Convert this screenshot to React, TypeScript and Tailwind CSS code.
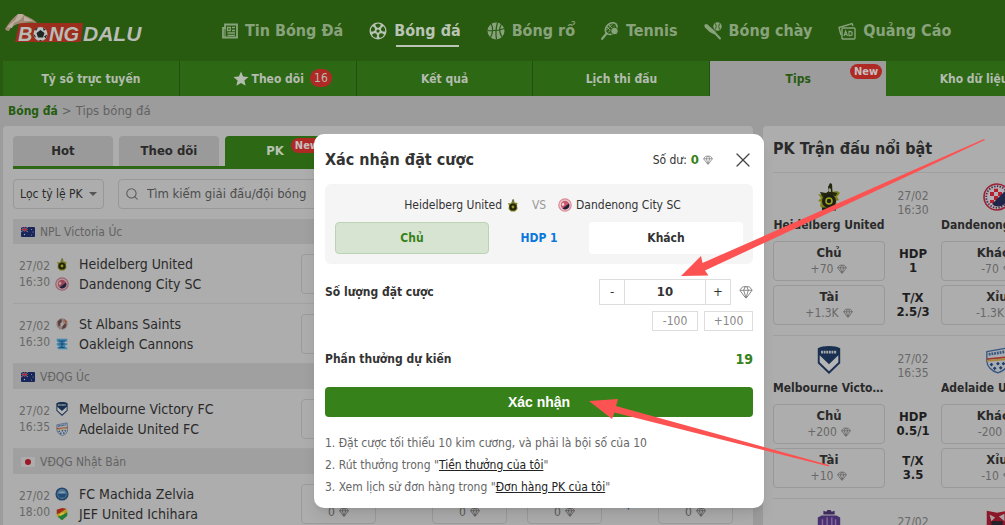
import React from "react";
import { Gem, Search, X } from "lucide-react";
import { MdStar } from "react-icons/md";

type Side = { name: string; crest: React.ReactNode };
type Match = { date: string; time: string; home: Side; away: Side };
type League = { name: string; flag: React.ReactNode; matches: Match[] };

const svgBase = "block shrink-0";

function Heidelberg({ className }: { className: string }) {
  return (
    <svg viewBox="0 0 24 28" className={`${svgBase} ${className}`}>
      <path d="M13 2l2 2-1 5 6-1 3 2-3 4 2 3-3 1 1 5-4 4H7l-4-4 1-4-3-1 3-3-3-4 5 1 5-2z" fill="#7d8218" />
      <path d="M3 9l6 1 3-2-1-4 2-4 2 1 .5 8 5 1-2 3-6-1-7 2z" fill="#25270f" />
      <path d="M12 5l2 1v3h-2z" fill="#9a9a92" />
      <circle cx="12" cy="18" r="7" fill="#1d1f12" />
      <circle cx="12" cy="18" r="3" fill="none" stroke="#9ba51c" strokeWidth="1.6" />
      <path d="M5 26h14" stroke="#1d1f12" strokeWidth="3" />
    </svg>
  );
}

function HeidelbergSmall() {
  return (
    <svg viewBox="0 0 14 14" className="block size-3.5 shrink-0">
      <path d="M6.500 1.500h1.500l.5 3 3 .5-.5 2 .5 4-2.500 2.500H5L2.500 11 3 7.500 2 5l3 .5z" fill="#7c7f1e" />
      <path d="M6.500 1.500h1.200l.3 3H6.200z" fill="#6d7358" />
      <circle cx="7" cy="9" r="3.600" fill="#23240c" />
      <circle cx="7" cy="9" r="1.400" fill="#98992a" />
    </svg>
  );
}

function Dandenong({ className }: { className: string }) {
  return (
    <svg viewBox="0 0 28 28" className={`${svgBase} ${className}`}>
      <circle cx="14" cy="14" r="13" fill="#b9a9ad" stroke="#9a2234" strokeWidth="1.6" />
      <circle cx="14" cy="14" r="10.8" fill="none" stroke="#3c3550" strokeWidth="1.8" strokeDasharray="1.4 1.4" />
      <circle cx="14" cy="14" r="8.6" fill="#b5b1b6" />
      <path d="M7 9h4v4H7zM11 5.800h4V9h-4zM11 13h4v4h-4zM15 9h4v4h-4zM7 17h4v3H7z" fill="#b3202f" />
      <path d="M21.500 8.500A8.600 8.600 0 0 1 9 21z" fill="#20254a" />
    </svg>
  );
}

function DandenongSmall({ dim = false }: { dim?: boolean }) {
  return (
    <svg viewBox="0 0 14 14" className="block size-3.5 shrink-0">
      <circle cx="7" cy="7" r="6.200" fill={dim ? "#b39ba0" : "#f0c9d0"} stroke={dim ? "#a0606c" : "#dc8a98"} strokeWidth="1.2" />
      <circle cx="7" cy="7" r="4.200" fill={dim ? "#9c4755" : "#c9596b"} />
      <path d="M11 5.500A4.200 4.200 0 0 1 4.500 10.500z" fill="#23223c" />
      <path d="M3.500 6l2-1.500L6.500 7l-2 1z" fill={dim ? "#b8a3a7" : "#f3dde0"} />
    </svg>
  );
}

function StAlbans() {
  return (
    <svg viewBox="0 0 16 16" className="block size-3.5 shrink-0">
      <circle cx="8" cy="8" r="6.500" fill="#8e7f7d" />
      <path d="M3 5l4-3 1 5-4 4zM9 9l4-2-1 5-4 2z" fill="#5c3a3c" />
      <path d="M10 2l4 3-2 2z" fill="#a3502f" />
      <path d="M6 7l3-2 1 4-3 2z" fill="#a8a4a2" />
    </svg>
  );
}

function Oakleigh() {
  return (
    <svg viewBox="0 0 16 16" className="block size-3.5 shrink-0">
      <path d="M2 2h12v3h-3v2h3v2h-2v3h2v2H4l-2-2 3-1-3-2V7l3-1-3-1z" fill="#3f86b0" />
      <path d="M4 4.500h8M5 8h6M5 12h6M8 4v8" stroke="#1c4a70" strokeWidth="1.200" />
    </svg>
  );
}

function Victory({ className }: { className: string }) {
  return (
    <svg viewBox="0 0 26 30" className={`${svgBase} ${className}`}>
      <path d="M13 0c5 0 9 .8 12 2.500v16L13 30 1 18.500v-16C4 .8 8 0 13 0z" fill="#1a3050" />
      <path d="M3 10l10 9.500L23 10v7.500L13 27 3 17.500z" fill="#b4b6b8" />
      <path d="M4.500 6.500h17" stroke="#a9acaf" strokeWidth="3" strokeDasharray="2 .8" />
    </svg>
  );
}

function Adelaide({ className }: { className: string }) {
  return (
    <svg viewBox="0 0 26 30" className={`${svgBase} ${className}`}>
      <path d="M2 6L24 2l1 14c0 7-5 11-11 13C7 27 2 22 2 16z" fill="#a9acb2" stroke="#34567f" strokeWidth="1.400" />
      <path d="M4 9l18-3" stroke="#34567f" strokeWidth="3" strokeDasharray="2 1" />
      <path d="M2 13l22-2v2L2 15z" fill="#a3372e" />
      <path d="M2 15l22-2v2L2 17z" fill="#a98a3e" />
      <path d="M7 18l2 2-2 2-2-2zM14 17l2 2-2 2-2-2zM20 17l2 2-2 2-2-2zM10.500 22l2 2-2 2-2-2zM17 21.500l2 2-2 2-2-2z" fill="#1d3d6b" />
    </svg>
  );
}

function Machida() {
  return (
    <svg viewBox="0 0 16 16" className="block size-3.5 shrink-0">
      <circle cx="8" cy="8" r="7.500" fill="#26476a" />
      <circle cx="8" cy="8" r="5.600" fill="#4d7594" />
      <path d="M3 8h10l-2 4H5z" fill="#234b75" />
      <path d="M5 6h6" stroke="#94a5b2" strokeWidth="1.400" />
    </svg>
  );
}

function Jef() {
  return (
    <svg viewBox="0 0 16 16" className="block size-3.5 shrink-0">
      <path d="M2 3l6-2 6 2v7l-6 5-6-5z" fill="#b59c20" />
      <path d="M2 3l6-2 5 1-8 5-3 1z" fill="#a32a22" />
      <path d="M3 11l4-1 7-4v4l-6 5z" fill="#1f7c3c" />
      <path d="M5 8l5-2v2l-4 2z" fill="#d0c34a" />
    </svg>
  );
}

function Sanfrecce({ className }: { className: string }) {
  return (
    <svg viewBox="0 0 28 30" className={`${svgBase} ${className}`}>
      <path d="M8 2l3 1 1.500-2h3L17 3l3-1v4H8z" fill="#3f2a5c" />
      <path d="M2 9l4-2h16l4 2v11L14 30 2 20z" fill="#493170" />
      <path d="M7 11v13M12 9v17M17 9v17M21 11v12" stroke="#84699f" strokeWidth="1.500" />
    </svg>
  );
}

function RedCrest({ className }: { className: string }) {
  return (
    <svg viewBox="0 0 28 30" className={`${svgBase} ${className}`}>
      <path d="M3 2l11 2 11-2v18L14 30 3 20z" fill="#8b1728" />
      <path d="M6 6l6 3-4 4zM16 8l6-3v8z" fill="#aaa2a2" />
      <path d="M8 13h12v5H8z" fill="#23212c" />
    </svg>
  );
}

function AustraliaFlag() {
  return (
    <svg viewBox="0 0 14 10" className="block h-2.5 w-3.5 shrink-0">
      <rect width="14" height="10" rx="1" fill="#17275c" />
      <path d="M0 0l7 5M7 0L0 5" stroke="#9a9aa8" strokeWidth=".8" />
      <path d="M3.500 0v5M0 2.500h7" stroke="#9f2f3c" strokeWidth="1.200" />
      <circle cx="3.500" cy="7.500" r=".7" fill="#a5a5b0" />
      <circle cx="10.500" cy="2.500" r=".5" fill="#a5a5b0" />
      <circle cx="12" cy="5" r=".5" fill="#a5a5b0" />
      <circle cx="10.500" cy="8" r=".5" fill="#a5a5b0" />
    </svg>
  );
}

function JapanFlag() {
  return (
    <svg viewBox="0 0 14 10" className="block h-2.5 w-3.5 shrink-0">
      <rect width="14" height="10" rx="1" fill="#acacac" />
      <circle cx="7" cy="5" r="3" fill="#9c1826" />
    </svg>
  );
}

function Logo() {
  return (
    <svg viewBox="0 0 144 34" className="block h-[34px] w-36 shrink-0" role="img" aria-label="Bong Dalu">
      <path d="M14 9h64l-2 19H10z" fill="#9d2d1c" />
      <g fontFamily="Liberation Sans, sans-serif" fontWeight="700" fontStyle="italic" fontSize="20" fill="#b9bcb6">
        <text x="13" y="27">B</text>
        <text x="44" y="27">NG</text>
        <text x="78" y="27" fontSize="21">DALU</text>
      </g>
      <path d="M0 15Q7 4 13 0q3-1 6 1 8 3 13 8-6-1-13 0-7 0-12 4-2 1-3 4Q1 17 0 15z" fill="#a08a76" />
      <path d="M13 0q3-1 6 1l-4 5-6 3zM2 13l8-7-3 8zM19 2l9 5-9 0z" fill="#bcae9e" />
      <circle cx="35.500" cy="20" r="7" fill="#bcc0c0" />
      <path d="M35.500 16l4 3-1.500 4.500h-5L31.500 19zM30 15l3-1.500-2 3.500zM38 13.500l3 2.500-2.500.5zM42 20.500l-1 4-2-2zM33.500 26h4l-2 1zM28.600 20l2 2-.5 2.500z" fill="#202522" />
    </svg>
  );
}

function NewsIcon() {
  return (
    <svg viewBox="0 0 16 16" className="block size-4 shrink-0" fill="none" stroke="currentColor" strokeWidth="1.800">
      <path d="M3 1.500h12v13H1V5h2z" />
      <path d="M3 5v9" strokeWidth="1.200" />
      <path d="M5.500 4.500h2.800v3H5.500zM10 4.500h3M10 7.500h3M5.500 10h7.500M5.500 12.300h7.500" strokeWidth="1.300" />
    </svg>
  );
}

function SoccerIcon() {
  return (
    <svg viewBox="0 0 18 18" className="block size-[18px] shrink-0">
      <circle cx="9" cy="9" r="8.500" fill="currentColor" />
      <g fill="#285a10">
        {[0, 72, 144, 216, 288].map((angle) => (
          <path key={angle} d="M6.200 2.400L9 1.600l2.800.8-.8 2.400L9 6 7 4.800z" transform={`rotate(${angle} 9 9)`} />
        ))}
        <path d="M9 7.300l1.700 1.200-.6 2H7.900l-.6-2z" />
      </g>
    </svg>
  );
}

function BasketballIcon() {
  return (
    <svg viewBox="0 0 18 18" className="block size-[18px] shrink-0">
      <circle cx="9" cy="9" r="8.500" fill="currentColor" />
      <g fill="none" stroke="#285a10" strokeWidth="1.200">
        <path d="M10.500 .5Q8 9 9.500 17.500M.5 8.500Q9 9.500 17.500 6.500" />
        <path d="M4 1.500Q7.500 8 3.500 15.500M14.500 2Q10.500 8 15 15" />
      </g>
    </svg>
  );
}

function TennisIcon() {
  return (
    <svg viewBox="0 0 18 18" className="block size-[18px] shrink-0" fill="none" stroke="currentColor">
      <ellipse cx="10.200" cy="6.600" rx="6.600" ry="5" transform="rotate(-45 10.200 6.600)" strokeWidth="1.600" />
      <path d="M6 5l6 6M8 3l6 6M5 8.500l7-7M7 10.500l7-7" strokeWidth="1" />
      <path d="M5.500 11.500L1.200 16.800" strokeWidth="2.200" strokeLinecap="round" />
      <circle cx="13.500" cy="9" r="3.800" fill="currentColor" stroke="#285a10" />
    </svg>
  );
}

function BaseballIcon() {
  return (
    <svg viewBox="0 0 18 18" className="block size-[18px] shrink-0">
      <path d="M.8 2.500Q2.200 1.500 3.500 2.500L12 10l-1.500 2.500Q4.500 10 1 5.500-.2 3.700.8 2.500z" fill="currentColor" />
      <path d="M10 10l6 6.500" stroke="currentColor" strokeWidth="2" strokeLinecap="round" />
      <circle cx="13.500" cy="4.500" r="4.200" fill="currentColor" />
      <path d="M11.500 1.500q1.500 2.500 0 6M15.500 1.500q-1.500 2.500 0 6" stroke="#285a10" strokeWidth=".9" fill="none" />
    </svg>
  );
}

function AdIcon() {
  return (
    <svg viewBox="0 0 18 18" className="block size-[18px] shrink-0" fill="none" stroke="currentColor" strokeWidth="1.400">
      <rect x="4" y="6" width="13" height="11" rx="1" />
      <path d="M3 13L1 5.500 14 1.500l1 2.500" />
      <path d="M6 14l1.700-5 1.700 5M6.500 12.500h2.400M11 9.300v4.400h1q2.200-.2 2.200-2.200T12 9.300z" strokeWidth="1.200" />
    </svg>
  );
}

const sports = [
  { label: "Tin Bóng Đá", icon: <NewsIcon /> },
  { label: "Bóng đá", icon: <SoccerIcon />, active: true },
  { label: "Bóng rổ", icon: <BasketballIcon /> },
  { label: "Tennis", icon: <TennisIcon /> },
  { label: "Bóng chày", icon: <BaseballIcon /> },
  { label: "Quảng Cáo", icon: <AdIcon /> },
];

const leagues: League[] = [
  {
    name: "NPL Victoria Úc",
    flag: <AustraliaFlag />,
    matches: [
      {
        date: "27/02",
        time: "16:30",
        home: { name: "Heidelberg United", crest: <HeidelbergSmall /> },
        away: { name: "Dandenong City SC", crest: <DandenongSmall dim /> },
      },
      {
        date: "27/02",
        time: "16:30",
        home: { name: "St Albans Saints", crest: <StAlbans /> },
        away: { name: "Oakleigh Cannons", crest: <Oakleigh /> },
      },
    ],
  },
  {
    name: "VĐQG Úc",
    flag: <AustraliaFlag />,
    matches: [
      {
        date: "27/02",
        time: "16:35",
        home: { name: "Melbourne Victory FC", crest: <Victory className="size-3.5" /> },
        away: { name: "Adelaide United FC", crest: <Adelaide className="size-3.5" /> },
      },
    ],
  },
  {
    name: "VĐQG Nhật Bản",
    flag: <JapanFlag />,
    matches: [
      {
        date: "27/02",
        time: "18:00",
        home: { name: "FC Machida Zelvia", crest: <Machida /> },
        away: { name: "JEF United Ichihara", crest: <Jef /> },
      },
    ],
  },
];

const featured = [
  {
    date: "27/02",
    time: "16:30",
    home: "Heidelberg United",
    away: "Dandenong City SC",
    homeCrest: <Heidelberg className="h-7 w-6" />,
    awayCrest: <Dandenong className="size-7" />,
    lines: [
      { left: "Chủ", leftValue: "+70", label: "HDP", value: "1", right: "Khách", rightValue: "-70" },
      { left: "Tài", leftValue: "+1.3K", label: "T/X", value: "2.5/3", right: "Xỉu", rightValue: "-1.3K" },
    ],
  },
  {
    date: "27/02",
    time: "16:35",
    home: "Melbourne Victory FC",
    away: "Adelaide United FC",
    homeCrest: <Victory className="h-7 w-7" />,
    awayCrest: <Adelaide className="h-7 w-6" />,
    lines: [
      { left: "Chủ", leftValue: "+200", label: "HDP", value: "0.5/1", right: "Khách", rightValue: "-200" },
      { left: "Tài", leftValue: "+10", label: "T/X", value: "3.5", right: "Xỉu", rightValue: "-10" },
    ],
  },
  {
    date: "27/02",
    time: "17:00",
    home: "Sanfrecce Hiroshima",
    away: "Kashima Antlers",
    homeCrest: <Sanfrecce className="size-7" />,
    awayCrest: <RedCrest className="size-7" />,
    lines: [],
  },
];

function OddsButton() {
  return (
    <button className="flex h-10 w-[75px] flex-col items-center justify-center rounded border border-[#9b9b9b] text-xs leading-4 text-[#5c5c5c]">
      <span className="font-bold text-[#2a2a2a]">PK</span>
      <span className="flex items-center gap-1">
        0 <Gem className="size-2.5" />
      </span>
    </button>
  );
}

function MatchRow({ match }: { match: Match }) {
  return (
    <li className="flex h-[60px] items-center border-b border-[#a2a2a2] pl-1.5">
      <div className="w-9 text-[12px] leading-4 text-[#686868]">
        <div>{match.date}</div>
        <div>{match.time}</div>
      </div>
      <div className="flex w-[246px] flex-col text-[14px] leading-5 text-[#2a2a2a]">
        {[match.home, match.away].map((side) => (
          <a key={side.name} href="#" className="flex items-center gap-2.5">
            {side.crest}
            {side.name}
          </a>
        ))}
      </div>
      <div className="flex items-center gap-5">
        {["HDP", "T/X"].map((label) => (
          <div key={label} className="flex items-center">
            <OddsButton />
            <span className="w-14 text-center text-xs font-bold text-[#0d4f8f]">{label}</span>
            <OddsButton />
          </div>
        ))}
      </div>
    </li>
  );
}

function FeaturedBox({ label, value }: { label: string; value: string }) {
  return (
    <button className="flex h-10 w-28 flex-col items-center justify-center rounded border border-[#999999]">
      <span className="text-[13px] leading-4 font-bold text-[#2a2a2a]">{label}</span>
      <span className="flex items-center gap-1 text-[12px] leading-4 text-[#686868]">
        {value}
        <Gem className="size-2.5" />
      </span>
    </button>
  );
}

function FeaturedTeam({ name, crest }: { name: string; crest: React.ReactNode }) {
  return (
    <div className="flex w-28 flex-col items-center">
      {crest}
      <span className="mt-1.5 w-full truncate text-center text-[12px] leading-4 font-bold text-[#2a2a2a]">{name}</span>
    </div>
  );
}

function FeaturedMatch({ match }: { match: (typeof featured)[number] }) {
  return (
    <article className="border-t border-[#a0a0a0] pt-2.5 pb-2.5">
      <div className="flex h-[58px] justify-between">
        <FeaturedTeam name={match.home} crest={match.homeCrest} />
        <div className="mt-1.5 text-center text-[12px] leading-3.5 text-[#686868]">
          <div>{match.date}</div>
          <div>{match.time}</div>
        </div>
        <FeaturedTeam name={match.away} crest={match.awayCrest} />
      </div>
      <div className="flex flex-col gap-1">
        {match.lines.map((line) => (
          <div key={line.label} className="flex items-center justify-between">
            <FeaturedBox label={line.left} value={line.leftValue} />
            <div className="text-center text-[13px] leading-3.5 font-bold text-[#1e1e1e]">
              <div>{line.label}</div>
              <div>{line.value}</div>
            </div>
            <FeaturedBox label={line.right} value={line.rightValue} />
          </div>
        ))}
      </div>
    </article>
  );
}

const subNavItem = "flex flex-1 items-center justify-center border-r border-[#225010] text-[12px] font-bold text-[#b4bcb0]";

function BetDialog() {
  return (
    <div
      role="dialog"
      aria-labelledby="bet-title"
      className="absolute top-[134px] left-[314px] w-[450px] rounded-[10px] bg-white px-[11px] pt-3 pb-2.5 text-[#333] shadow-lg"
    >
      <div className="flex h-[38px] items-start">
        <h2 id="bet-title" className="flex-1 text-[16px] leading-7 font-bold">Xác nhận đặt cược</h2>
        <span className="flex h-7 items-center gap-1 text-[12px]">
          Số dư: <b className="text-[13px] text-[#37811a]">0</b>
          <Gem className="size-2.5 text-[#888]" />
        </span>
        <button aria-label="Đóng" className="ml-5 flex h-7 w-5 items-center justify-center text-[#444]">
          <X className="size-6 shrink-0" strokeWidth={1.2} />
        </button>
      </div>

      <section className="rounded-md bg-[#f5f5f5] px-2.5 pt-3 pb-2.5">
        <div className="flex h-[18px] items-center text-[12px]">
          <span className="flex flex-1 items-center justify-end gap-1">
            Heidelberg United <HeidelbergSmall />
          </span>
          <span className="w-[38px] text-center text-[#999]">VS</span>
          <span className="flex flex-1 items-center gap-1">
            <DandenongSmall /> Dandenong City SC
          </span>
        </div>
        <div className="mt-2 flex items-center text-[12px] font-bold">
          <button className="h-8 w-[154px] rounded border border-[#bdd2b5] bg-[#d8e4d2] text-[#37811a]">Chủ</button>
          <span className="flex-1 text-center text-[#0a78dc]">HDP 1</span>
          <button className="h-8 w-[154px] rounded bg-white">Khách</button>
        </div>
      </section>

      <div className="mt-[15px] flex items-center">
        <label htmlFor="amount" className="flex-1 text-[12px] font-bold">Số lượng đặt cược</label>
        <div className="flex h-[26px] w-[132px] border border-[#ddd]">
          <button aria-label="Giảm" className="w-6 text-[13px]">-</button>
          <input
            id="amount"
            defaultValue="10"
            className="min-w-0 flex-1 border-x border-[#ddd] text-center text-[13px] font-bold outline-none"
          />
          <button aria-label="Tăng" className="w-6 text-[13px]">+</button>
        </div>
        <Gem className="ml-2 size-3.5 text-[#777]" strokeWidth={1.5} />
      </div>
      <div className="mt-1.5 flex justify-end gap-1.5 text-[12px] text-[#888]">
        <button className="h-5 w-[46px] border border-[#ddd]">-100</button>
        <button className="h-5 w-[49px] border border-[#ddd]">+100</button>
      </div>

      <div className="mt-[18px] flex h-5 items-center justify-between font-bold">
        <span className="text-[12px]">Phần thưởng dự kiến</span>
        <span className="text-[14px] text-[#37811a]">19</span>
      </div>

      <button className="mt-[18px] h-[30px] w-full rounded bg-[#37811a] font-['Liberation_Sans',sans-serif] text-[14px] font-bold text-white">
        Xác nhận
      </button>

      <ol className="mt-[15px] text-[12px] leading-[22px] text-[#666]">
        <li>1. Đặt cược tối thiểu 10 kim cương, và phải là bội số của 10</li>
        <li>
          2. Rút thưởng trong "<a href="#" className="text-[#222] underline">Tiền thưởng của tôi</a>"
        </li>
        <li>
          3. Xem lịch sử đơn hàng trong "<a href="#" className="text-[#222] underline">Đơn hàng PK của tôi</a>"
        </li>
      </ol>
    </div>
  );
}

export default function App() {
  return (
    <div className="relative h-screen overflow-hidden bg-[#9c9c9c] font-['DejaVu_Sans_Condensed','Noto_Sans',sans-serif]">
      <header className="bg-[#285a10]">
        <div className="flex h-[61px] items-center pl-[5px]">
          <Logo />
          <nav className="ml-[73px] flex gap-[26px] text-[16px] font-bold whitespace-nowrap text-[#88a37c]">
            {sports.map((sport) => (
              <a
                key={sport.label}
                href="#"
                className={sport.active ? "flex items-center gap-[7px] text-[#b9c4b4]" : "flex items-center gap-[7px]"}
              >
                {sport.icon}
                <span className={sport.active ? "relative after:absolute after:inset-x-0.5 after:-bottom-1 after:h-0.5 after:bg-[#b9c4b4]" : ""}>
                  {sport.label}
                </span>
              </a>
            ))}
          </nav>
        </div>
        <nav className="pl-[3px]">
          <div className="flex h-[35px] w-[1060px] bg-[#2d6915]">
            <a href="#" className={subNavItem}>Tỷ số trực tuyến</a>
            <a href="#" className={subNavItem}>
              <MdStar className="mr-0.5 size-[18px]" />
              <span className="relative">
                Theo dõi
                <span className="absolute -top-px left-full ml-1.5 w-[22px] rounded-full bg-[#b02a25] text-center leading-[18px] font-normal">16</span>
              </span>
            </a>
            <a href="#" className={subNavItem}>Kết quả</a>
            <a href="#" className={subNavItem}>Lịch thi đấu</a>
            <a href="#" className="relative flex flex-1 items-center justify-center bg-[#9c9c9c] text-[12px] font-bold text-[#275a10]">
              Tips
              <span className="absolute top-[3px] right-1 rounded-full bg-[#b02a25] px-1 text-[11px] leading-[15px] text-[#c8c0c0]">New</span>
            </a>
            <a href="#" className={subNavItem}>Kho dữ liệu</a>
          </div>
        </nav>
      </header>

      <nav className="flex h-[30px] items-center gap-1 pl-2 text-[13px] text-[#626262]">
        <a href="#" className="text-[12px] font-bold text-[#245c0e]">Bóng đá</a>
        <span>&gt;</span>
        <a href="#">Tips bóng đá</a>
      </nav>

      <main className="flex gap-2.5 pl-[3px]">
        <section className="w-[750px] shrink-0 rounded-t bg-[#adadad] px-2.5 pt-2.5">
          <div className="flex gap-1.5 border-b-[3px] border-[#2d6915] text-[13px] font-bold text-[#2a2a2a]">
            <button className="h-[30px] w-[100px] rounded-t bg-[#9a9a9a]">Hot</button>
            <button className="h-[30px] w-[100px] rounded-t bg-[#9a9a9a]">Theo dõi</button>
            <button className="relative h-[30px] w-[100px] rounded-t bg-[#2d6915] text-[#b8c2b3]">
              PK
              <span className="absolute top-0.5 right-0.5 rounded-full bg-[#b02a25] px-1 text-[11px] leading-[15px] text-[#c8c0c0]">New</span>
            </button>
          </div>
          <div className="mt-2.5 flex gap-3.5">
            <div className="relative flex items-center">
              <select aria-label="Lọc tỷ lệ PK" className="h-[30px] w-[91px] appearance-none rounded border border-[#989898] bg-transparent pl-1.5 text-[12px] text-[#2a2a2a]">
                <option>Lọc tỷ lệ PK</option>
              </select>
              <svg viewBox="0 0 8 4" className="pointer-events-none absolute right-[7px] h-1 w-2">
                <path d="M0 0h8L4 4z" fill="#555" />
              </svg>
            </div>
            <label className="flex h-[30px] w-[300px] items-center gap-2 rounded border border-[#989898] pl-1.5 text-[#5a5a5a]">
              <Search className="size-3.5" strokeWidth={1.8} />
              <input aria-label="Tìm kiếm" placeholder="Tìm kiếm giải đấu/đội bóng" className="min-w-0 flex-1 bg-transparent text-[13px] outline-none placeholder:text-[#4c4c4c]" />
            </label>
          </div>
          <div className="mt-2.5">
            {leagues.map((league) => (
              <div key={league.name}>
                <h3 className="flex h-[25px] items-center gap-[5px] bg-[#a0a0a0] pl-2 text-[12px] text-[#636363]">
                  {league.flag}
                  {league.name}
                </h3>
                <ul>
                  {league.matches.map((match) => (
                    <MatchRow key={match.home.name} match={match} />
                  ))}
                </ul>
              </div>
            ))}
          </div>
        </section>

        <aside className="w-[300px] shrink-0 rounded-t bg-[#adadad] px-2.5">
          <h2 className="flex h-[46px] items-center text-[16px] font-bold text-[#2a2a2a]">PK Trận đấu nổi bật</h2>
          {featured.map((match) => (
            <FeaturedMatch key={match.home} match={match} />
          ))}
        </aside>
      </main>

      <BetDialog />

      <svg viewBox="0 0 1005 525" className="pointer-events-none absolute top-0 left-0 h-[525px] w-[1005px]" fill="#fc5252">
        <path d="M681 276L701 256L702.500 263L984 139L985 140L705 270.500L708.500 275.500Z" />
        <path d="M589 401L618 399L616 406L829 465L829 466.500L614.500 412.500L612 419Z" />
      </svg>
    </div>
  );
}
